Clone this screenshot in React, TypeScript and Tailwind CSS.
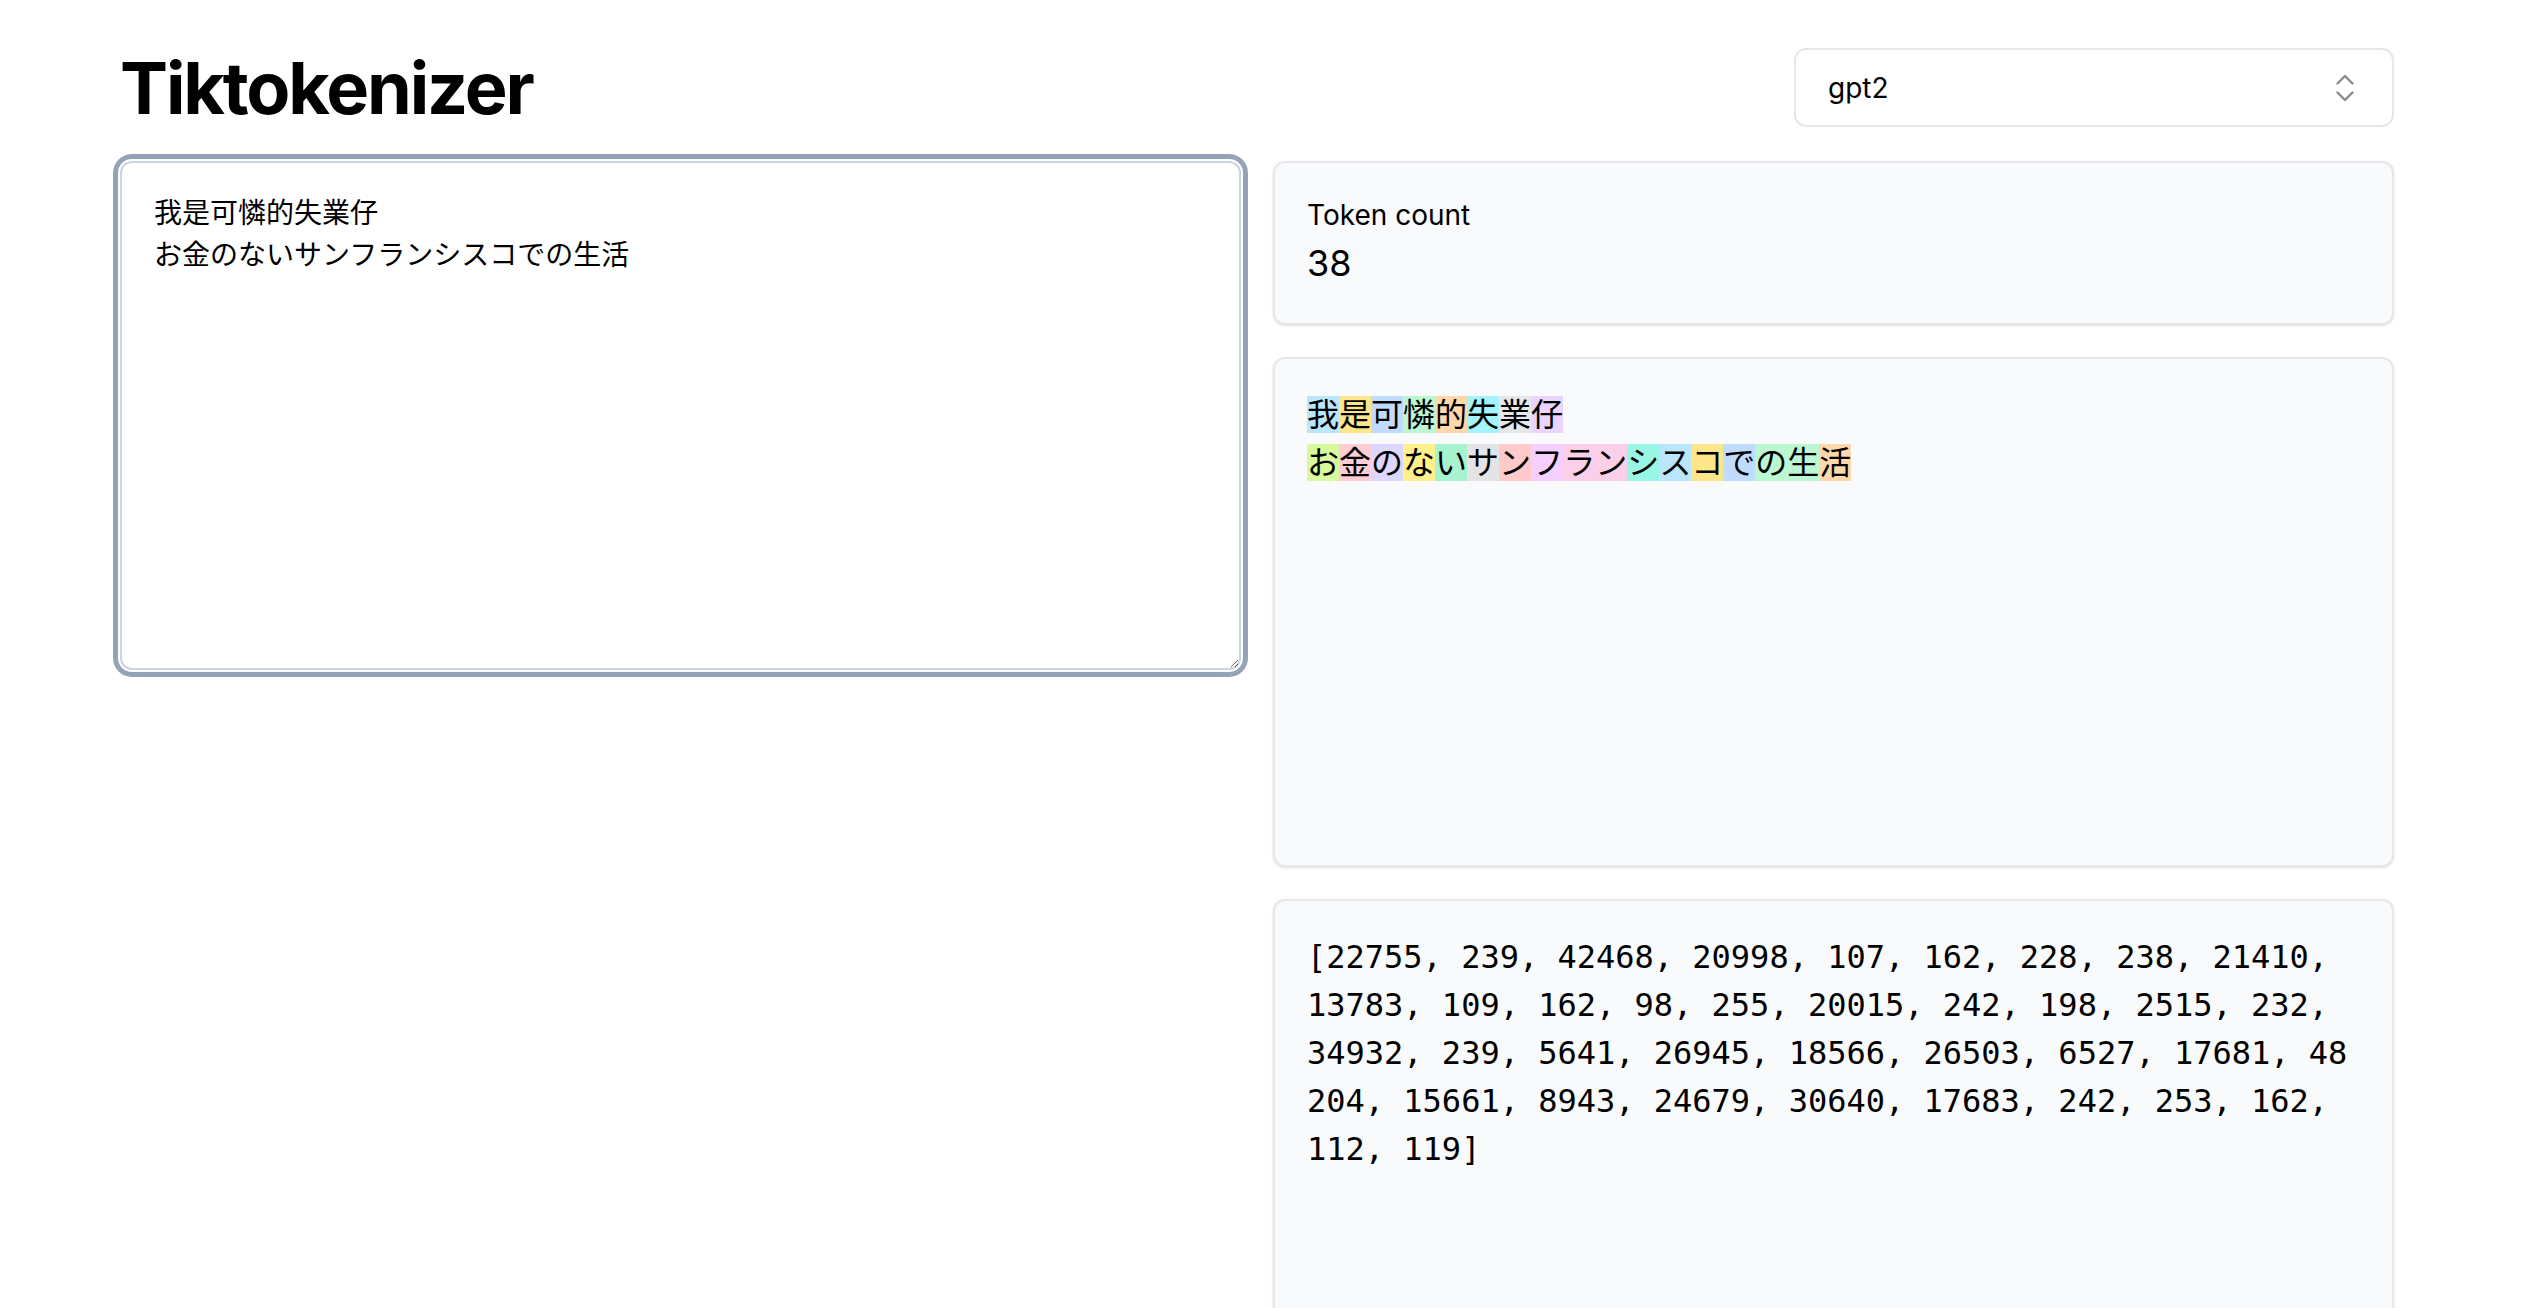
import { ChevronsUpDown } from "lucide-react";

const COLORS = [
  "bg-[#bae6fd]",
  "bg-[#fde68a]",
  "bg-[#bfdbfe]",
  "bg-[#bbf7d0]",
  "bg-[#fed7aa]",
  "bg-[#a5f3fc]",
  "bg-[#e5e7eb]",
  "bg-[#e9d5ff]",
  "bg-[#c7d2fe]",
  "bg-[#d9f99d]",
  "bg-[#fecdd3]",
  "bg-[#ddd6fe]",
  "bg-[#fef08a]",
  "bg-[#a7f3d0]",
  "bg-[#e4e4e7]",
  "bg-[#fecaca]",
  "bg-[#f5d0fe]",
  "bg-[#fbcfe8]",
  "bg-[#99f6e4]",
];

const LINE1 = ["我", "是", "可", "憐", "的", "失", "業", "仔"];
const LINE2 = ["お", "金", "の", "な", "い", "サ", "ン", "フ", "ラン", "シ", "ス", "コ", "で", "の生", "活"];

const IDS =
  "[22755, 239, 42468, 20998, 107, 162, 228, 238, 21410, 13783, 109, 162, 98, 255, 20015, 242, 198, 2515, 232, 34932, 239, 5641, 26945, 18566, 26503, 6527, 17681, 48204, 15661, 8943, 24679, 30640, 17683, 242, 253, 162, 112, 119]";

function TokenLine({ tokens, offset }: { tokens: string[]; offset: number }) {
  return (
    <div className="flex h-[48px] items-center">
      {tokens.map((t, i) => (
        <span key={i} className={`h-[37px] leading-[37px] ${COLORS[(offset + i) % COLORS.length]}`}>
          {t}
        </span>
      ))}
    </div>
  );
}

export default function App() {
  return (
    <div className="min-h-screen bg-white text-black">
      <div className="ml-[120px] w-[2274px] pb-[80px] font-['Inter','Noto_Sans_CJK_JP',sans-serif]">
        <header className="mt-[48px] flex h-[79px] items-center justify-between">
          <h1 className="text-[72px] font-bold leading-none tracking-[-0.03em]">Tiktokenizer</h1>
          <div className="flex h-full w-[600px] items-center justify-between rounded-[12px] border-2 border-[#e5e7eb] bg-white pl-[32px] pr-[29px] text-[28px]">
            <span>gpt2</span>
            <ChevronsUpDown size={36} strokeWidth={1.6} className="text-[#8a8a8a]" />
          </div>
        </header>

        <div className="mt-[34px] grid grid-cols-2 gap-8">
          <div>
            <textarea
              defaultValue={"我是可憐的失業仔\nお金のないサンフランシスコでの生活"}
              className="block h-[509px] w-full resize-y rounded-[12px] border-2 border-[#cbd5e1] bg-white px-8 pt-[29px] pb-8 text-[28px] leading-[42px] text-black shadow-[0_0_0_2px_#ffffff,0_0_0_7px_#94a3b8] outline-none font-['Inter','Noto_Sans_CJK_JP',sans-serif]"
            />
          </div>

          <div className="flex flex-col gap-8">
            <div className="rounded-[12px] border-2 border-[#e5e7eb] bg-[#f8fafc] p-8 shadow-sm">
              <div className="text-[28px] leading-[40px]">Token count</div>
              <div className="text-[36px] leading-[56px]">38</div>
            </div>

            <div className="h-[510px] rounded-[12px] border-2 border-[#e5e7eb] bg-[#f8fafc] px-8 pt-[31px] pb-8 text-[32px] shadow-sm">
              <TokenLine tokens={LINE1} offset={0} />
              <TokenLine tokens={LINE2} offset={9} />
            </div>

            <div className="h-[510px] rounded-[12px] border-2 border-[#e5e7eb] bg-[#f8fafc] p-8 shadow-sm">
              <p className="break-all text-[32px] leading-[48px] font-['DejaVu_Sans_Mono',monospace]">{IDS}</p>
            </div>
          </div>
        </div>
      </div>
    </div>
  );
}
